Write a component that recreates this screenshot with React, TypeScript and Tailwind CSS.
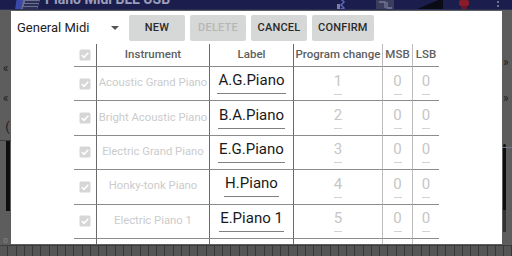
import React from "react";

interface Preset {
  instrument: string;
  label: string;
  program: number | null;
}

const presets: Preset[] = [
  { instrument: "Acoustic Grand Piano", label: "A.G.Piano", program: 1 },
  { instrument: "Bright Acoustic Piano", label: "B.A.Piano", program: 2 },
  { instrument: "Electric Grand Piano", label: "E.G.Piano", program: 3 },
  { instrument: "Honky-tonk Piano", label: "H.Piano", program: 4 },
  { instrument: "Electric Piano 1", label: "E.Piano 1", program: 5 },
  // next row only shows its lines before the dialog edge
  { instrument: "", label: "", program: null },
];

const CheckBox: React.FC = () => (
  <svg width="12" height="12" viewBox="0 0 12 12">
    <rect x="0.5" y="0.5" width="11" height="11" rx="1.5" fill="#d6d6d6" />
    <path d="M2.8 6.2 L5 8.3 L9.3 3.8" fill="none" stroke="#ffffff" strokeWidth="1.6" />
  </svg>
);

const Logo: React.FC = () => (
  <svg width="26" height="10" viewBox="0 0 26 10">
    <path d="M2 -4 L12 -4 L8 10 L0 10 Z" fill="#3a48a8" />
    <path d="M9 -4 L26 -4 L22 10 L6 10 Z" fill="#6a6f8e" />
    <path d="M10 2 L24 2 M9 5 L23 5 M8 8 L22 8" stroke="#1a1d45" strokeWidth="1.4" />
  </svg>
);

const TopBar: React.FC = () => (
  <div className="h-[10px] bg-[#1b1e4d] border-b border-[#2b2e55] flex items-start overflow-hidden relative">
    <div className="ml-[15px]">
      <Logo />
    </div>
    <div className="ml-[4px] -mt-[8px] text-[14px] leading-[14px] font-bold text-[#9c9eb9] whitespace-nowrap">
      Piano Midi BLE USB
    </div>
    <div className="flex-1" />
    <svg width="12" height="10" viewBox="0 0 12 10" className="mr-[28px]">
      <path d="M4 -3 L9 2 L6 5 L9 8 L4 10" fill="none" stroke="#5b66b8" strokeWidth="1.5" />
      <rect x="2" y="4" width="3" height="6" fill="#7a7fa6" />
    </svg>
    <svg width="20" height="10" viewBox="0 0 20 10" className="mr-[20px]">
      <rect x="1" y="0" width="18" height="10" fill="#3a3d5c" />
      <path d="M4 2 H10 V8 M12 2 V8 H17" fill="none" stroke="#777a96" strokeWidth="1.3" />
    </svg>
    <svg width="28" height="10" viewBox="0 0 28 10" className="mr-[14px]">
      <path d="M0 10 L28 -2 L28 10 Z" fill="#0b0b16" />
    </svg>
    <svg width="14" height="10" viewBox="0 0 14 10" className="mr-[26px]">
      <rect x="2" y="0" width="10" height="6" rx="2" fill="#8a1c2a" />
      <rect x="4" y="6" width="6" height="3" fill="#6e1722" />
    </svg>
    <div className="mr-[13px] flex flex-col items-center gap-[2px] mt-[1px]">
      <div className="w-[2px] h-[2px] rounded-full bg-[#8d8fa8]" />
      <div className="w-[2px] h-[2px] rounded-full bg-[#8d8fa8]" />
    </div>
  </div>
);

const Keyboard: React.FC = () => (
  <div className="h-[12px] flex bg-[#555555]">
    {Array.from({ length: 62 }).map((_, i) => (
      <div key={i} className="flex-1 border-r border-[#383838] border-t border-t-[#3d3d3d]" />
    ))}
  </div>
);

const Button: React.FC<{ text: string; disabled?: boolean }> = ({ text, disabled }) => (
  <div
    className={`h-[26px] min-w-[56px] px-[6px] rounded-[2px] bg-[#d6d7d7] flex items-center justify-center text-[11px] font-medium tracking-[0.2px] ${
      disabled ? "text-[#b6b6b6]" : "text-[#2a2a2a]"
    }`}
  >
    {text}
  </div>
);

const dark = "border-r border-[#6a6a6a] border-b border-b-[#8c8c8c]";
const light = "border-r border-[#bcbcbc] border-b border-b-[#8c8c8c]";
const last = "border-b border-[#8c8c8c]";

const NumberCell: React.FC<{ value: number | null; border: string }> = ({ value, border }) => (
  <div className={`flex flex-col items-center justify-center ${border}`}>
    {value !== null && (
      <>
        <span className="text-[15px] leading-[17px] text-[#c6c6c6]">{value}</span>
        <span className="mt-[4px] w-[8px] h-px bg-[#d2d2d2]" />
      </>
    )}
  </div>
);

const App: React.FC = () => {
  return (
    <div className="w-[512px] h-[256px] relative overflow-hidden bg-[#5d5d5d] flex flex-col [font-family:Roboto,sans-serif]">
      <TopBar />

      <div className="flex-1 flex">
        {/* left strip of the app behind */}
        <div className="w-[11px] flex flex-col items-center text-[#1e1e1e]">
          <div className="mt-[52px] text-[12px] leading-[12px]">«</div>
          <div className="mt-[18px] text-[12px] leading-[12px]">«</div>
          <div className="mt-[16px] ml-[4px] text-[13px] leading-[13px]">(</div>
          <div className="mt-[7px] w-full h-px bg-[#3c3c3c]" />
          <div className="ml-[4px] w-[4px] h-[70px] bg-[#0e0e0e]" />
          <div className="mt-[26px] text-[8px] leading-[8px] text-[#8a8a8a]">0</div>
        </div>
        <div className="flex-1" />
        {/* right strip */}
        <div className="w-[10px] flex flex-col items-start text-[#1e1e1e]">
          <div className="mt-[46px] ml-[1px] text-[12px] leading-[12px]">»</div>
          <div className="mt-[24px] ml-[1px] text-[12px] leading-[12px]">»</div>
          <div className="mt-[40px] ml-[1px] w-[3px] h-[3px] rounded-full bg-[#111111]" />
          <div className="w-full h-px bg-[#6f7890]" />
          <div className="ml-[1px] w-[3px] h-[62px] bg-[#0e0e0e]" />
          <div className="ml-[1px] w-[3px] h-[22px] bg-[#333333]" />
        </div>
      </div>

      <Keyboard />

      {/* dialog */}
      <div className="absolute left-[11px] top-[11px] w-[491px] h-[233px] bg-white overflow-hidden flex flex-col">
        <div className="flex items-center mt-[4px] h-[26px]">
          <div className="ml-[6px] w-[102px] flex items-center justify-between">
            <span className="text-[13px] text-[#222222]">General Midi</span>
            <svg width="8" height="4" viewBox="0 0 8 4">
              <path d="M0 0 L8 0 L4 4 Z" fill="#555555" />
            </svg>
          </div>
          <div className="ml-[10px] flex gap-[5px]">
            <Button text="NEW" />
            <Button text="DELETE" disabled />
            <Button text="CANCEL" />
            <Button text="CONFIRM" />
          </div>
        </div>

        <div className="mt-[3px] mx-auto w-[365px] grid grid-cols-[23px_113px_84px_89px_30px_26px] grid-rows-[23px] auto-rows-[34.4px]">
          <div className={`flex items-center justify-center ${dark}`}>
            <CheckBox />
          </div>
          <div className={`flex items-center justify-center ${dark} text-[11.5px] font-medium text-[#5e5e5e]`}>
            Instrument
          </div>
          <div className={`flex items-center justify-center ${dark} text-[11.5px] font-medium text-[#5e5e5e]`}>
            Label
          </div>
          <div className={`flex items-center justify-center ${light} text-[11.5px] font-medium text-[#5e5e5e] whitespace-nowrap`}>
            Program change
          </div>
          <div className={`flex items-center justify-center ${light} text-[11.5px] font-medium text-[#5e5e5e]`}>
            MSB
          </div>
          <div className={`flex items-center justify-center ${last} text-[11.5px] font-medium text-[#5e5e5e]`}>
            LSB
          </div>

          {presets.map((p, i) => (
            <React.Fragment key={i}>
              <div className={`flex items-center justify-center ${dark}`}>
                {p.program !== null && <CheckBox />}
              </div>
              <div className={`flex items-center justify-center ${dark} text-[11.3px] text-[#cbcbcb] whitespace-nowrap`}>
                {p.instrument}
              </div>
              <div className={`flex flex-col items-center justify-center ${dark}`}>
                {p.label && (
                  <span className="text-[15px] leading-[17px] text-[#1a1a1a] px-[1px] pb-[4px] border-b border-[#808080] whitespace-nowrap -mt-[1px]">
                    {p.label}
                  </span>
                )}
              </div>
              <NumberCell value={p.program} border={light} />
              <NumberCell value={p.program === null ? null : 0} border={light} />
              <NumberCell value={p.program === null ? null : 0} border={last} />
            </React.Fragment>
          ))}
        </div>
      </div>
    </div>
  );
};

export default App;
